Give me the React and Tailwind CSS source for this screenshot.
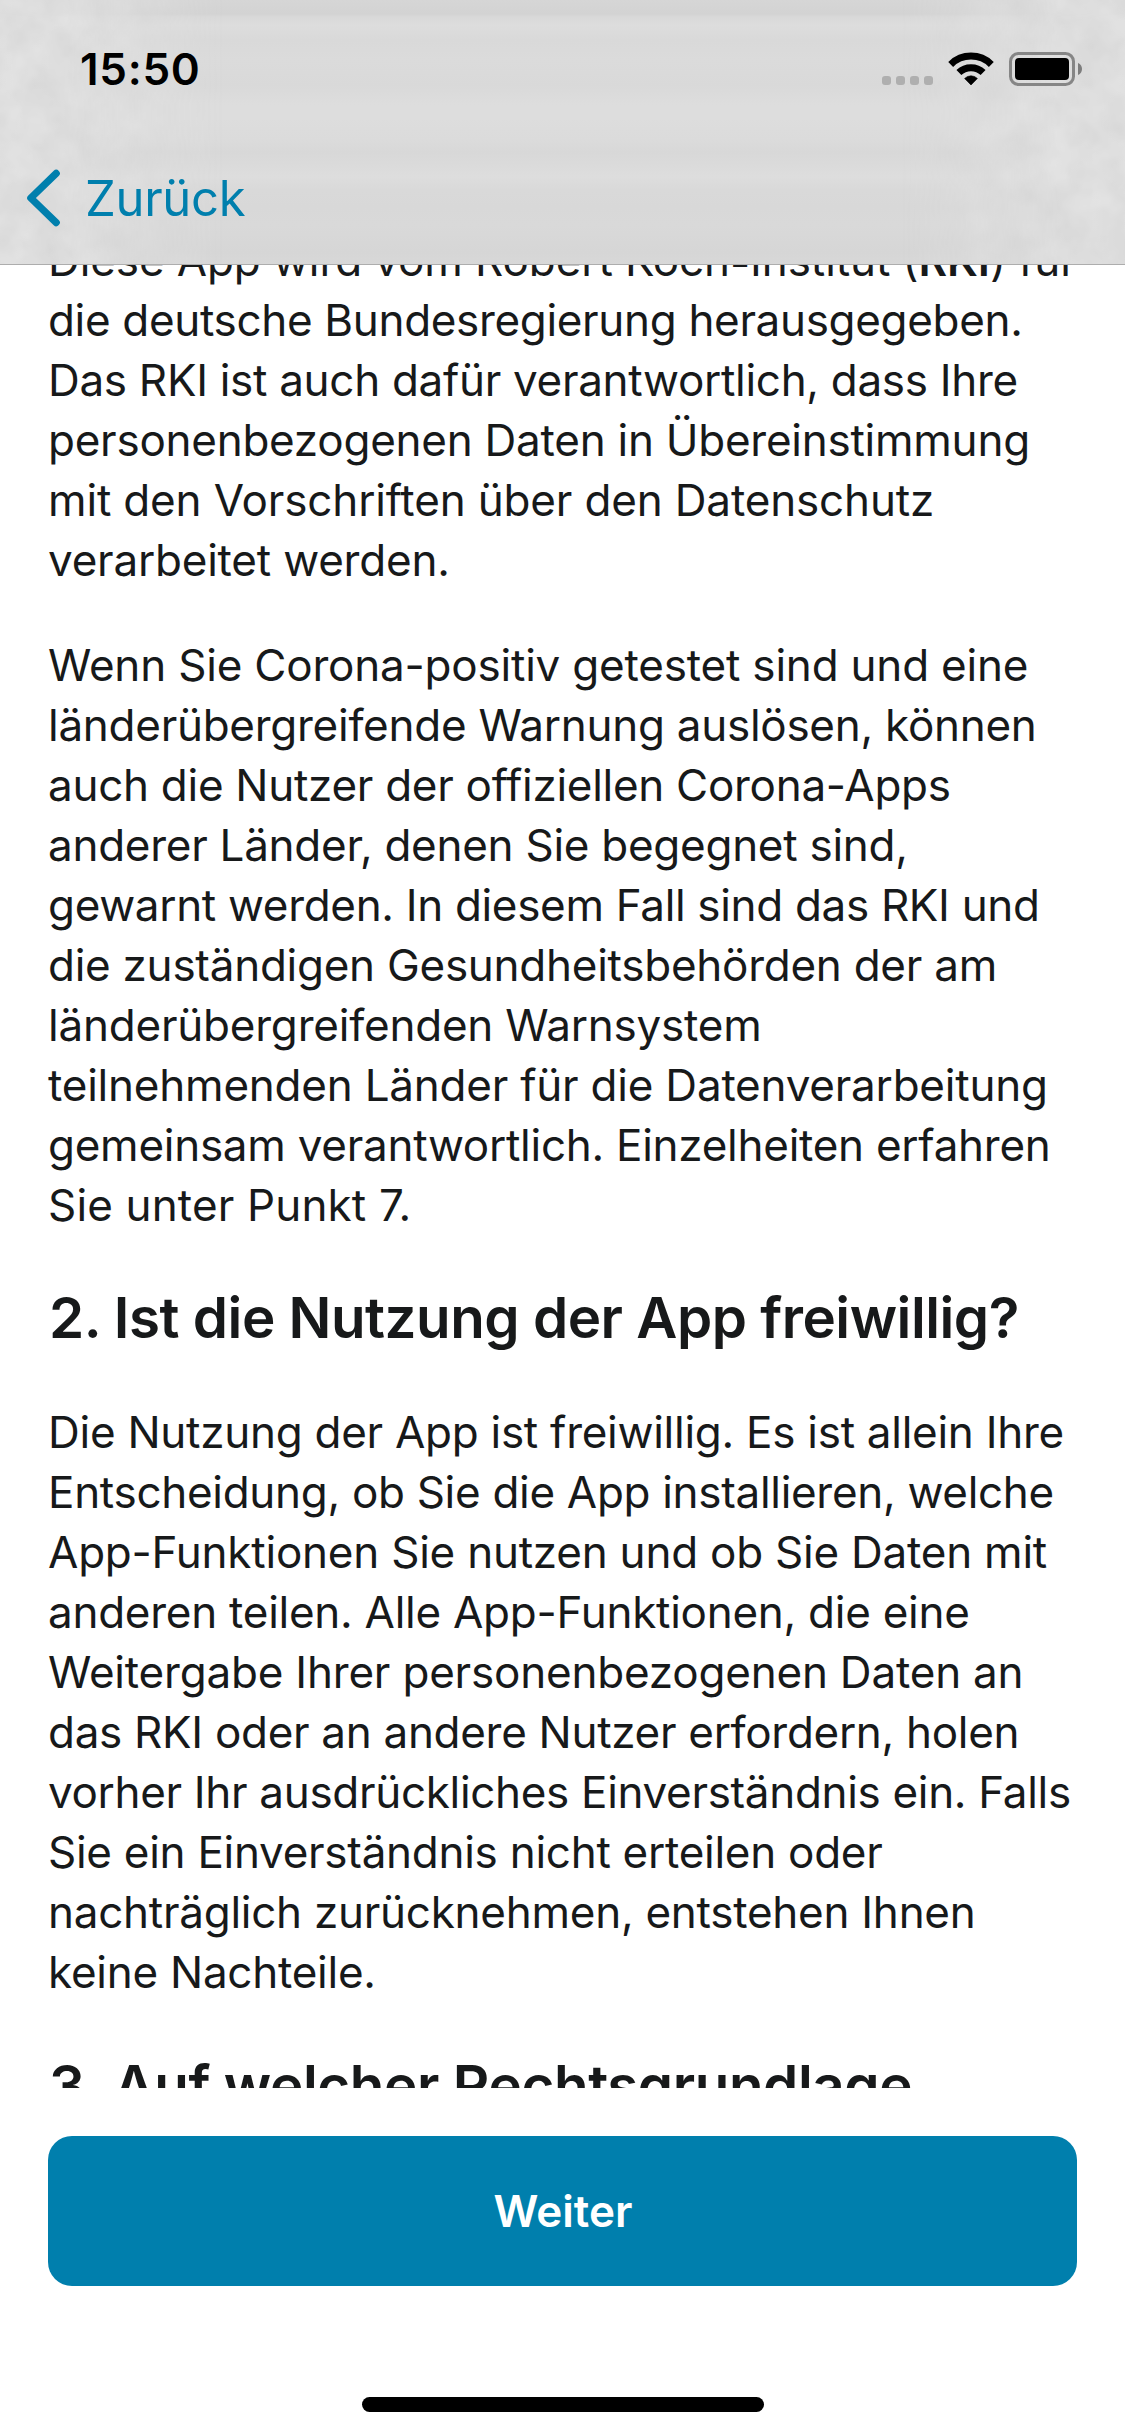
const intro = [
  { text: "die deutsche Bundesregierung herausgegeben.", cls: "tracking-[-0.33px]" },
  { text: "Das RKI ist auch dafür verantwortlich, dass Ihre", cls: "tracking-[-0.3px]" },
  { text: "personenbezogenen Daten in Übereinstimmung", cls: "tracking-[-0.25px]" },
  { text: "mit den Vorschriften über den Datenschutz", cls: "tracking-[-0.16px]" },
  { text: "verarbeitet werden.", cls: "tracking-[-0.21px]" },
];

const warning = [
  { text: "Wenn Sie Corona-positiv getestet sind und eine", cls: "tracking-[-0.2px]" },
  { text: "länderübergreifende Warnung auslösen, können", cls: "tracking-[-0.265px]" },
  { text: "auch die Nutzer der offiziellen Corona-Apps", cls: "tracking-[-0.28px]" },
  { text: "anderer Länder, denen Sie begegnet sind,", cls: "tracking-[-0.27px]" },
  { text: "gewarnt werden. In diesem Fall sind das RKI und", cls: "tracking-[-0.325px]" },
  { text: "die zuständigen Gesundheitsbehörden der am", cls: "tracking-[-0.26px]" },
  { text: "länderübergreifenden Warnsystem", cls: "tracking-[-0.21px]" },
  { text: "teilnehmenden Länder für die Datenverarbeitung", cls: "tracking-[-0.22px]" },
  { text: "gemeinsam verantwortlich. Einzelheiten erfahren", cls: "tracking-[-0.265px]" },
  { text: "Sie unter Punkt 7.", cls: "tracking-[0.15px]" },
];

const voluntary = [
  { text: "Die Nutzung der App ist freiwillig. Es ist allein Ihre", cls: "tracking-[-0.265px]" },
  { text: "Entscheidung, ob Sie die App installieren, welche", cls: "tracking-[-0.3px]" },
  { text: "App-Funktionen Sie nutzen und ob Sie Daten mit", cls: "tracking-[-0.23px]" },
  { text: "anderen teilen. Alle App-Funktionen, die eine", cls: "tracking-[-0.26px]" },
  { text: "Weitergabe Ihrer personenbezogenen Daten an", cls: "tracking-[-0.2px]" },
  { text: "das RKI oder an andere Nutzer erfordern, holen", cls: "tracking-[-0.3px]" },
  { text: "vorher Ihr ausdrückliches Einverständnis ein. Falls", cls: "tracking-[-0.32px]" },
  { text: "Sie ein Einverständnis nicht erteilen oder", cls: "tracking-[-0.27px]" },
  { text: "nachträglich zurücknehmen, entstehen Ihnen", cls: "tracking-[-0.26px]" },
  { text: "keine Nachteile.", cls: "tracking-[-0.25px]" },
];

function Lines({ lines }) {
  return lines.map((l) => (
    <span key={l.text} className={`block whitespace-nowrap ${l.cls}`}>
      {l.text}
    </span>
  ));
}

function HeaderTexture() {
  return (
    <svg className="absolute inset-0" width="1125" height="264" viewBox="0 0 1125 264" aria-hidden="true">
      <defs>
        <filter id="grain" x="0" y="0" width="100%" height="100%" colorInterpolationFilters="sRGB">
          <feTurbulence type="fractalNoise" baseFrequency="0.028" numOctaves="3" seed="7" />
          <feColorMatrix values="0.08 0 0 0 0.83  0.08 0 0 0 0.83  0.08 0 0 0 0.83  0 0 0 0 1" />
        </filter>
        <linearGradient id="sides">
          <stop offset="0" stopColor="#fff" stopOpacity="0.85" />
          <stop offset="0.06" stopColor="#fff" stopOpacity="0.8" />
          <stop offset="0.2" stopColor="#fff" stopOpacity="0" />
          <stop offset="0.8" stopColor="#fff" stopOpacity="0" />
          <stop offset="0.94" stopColor="#fff" stopOpacity="0.8" />
          <stop offset="1" stopColor="#fff" stopOpacity="0.85" />
        </linearGradient>
        <mask id="edges">
          <rect width="1125" height="264" fill="url(#sides)" />
        </mask>
      </defs>
      <g mask="url(#edges)">
        <rect width="1125" height="264" filter="url(#grain)" />
      </g>
    </svg>
  );
}

function WifiIcon() {
  return (
    <svg className="ml-[15px]" width="46" height="34" viewBox="0 0 46 34" aria-hidden="true">
      <g fill="none" stroke="#000" strokeWidth="7">
        <path d="M2.7 12.4 A29 29 0 0 1 43.3 12.4" />
        <path d="M10.9 20.6 A17.3 17.3 0 0 1 35.1 20.6" />
      </g>
      <path d="M23 33 L16.6 26.5 A9 9 0 0 1 29.4 26.5 Z" fill="#000" stroke="#000" strokeWidth="0.6" />
    </svg>
  );
}

function BatteryIcon() {
  return (
    <svg className="ml-[15px]" width="74" height="34" viewBox="0 0 74 34" aria-hidden="true">
      <rect x="1.5" y="1.5" width="63" height="31" rx="8" fill="none" stroke="#868686" strokeWidth="3" />
      <rect x="6" y="6" width="54" height="22" rx="4" fill="#000" />
      <path d="M69 11 C71.8 12.2 73 14.4 73 17 C73 19.6 71.8 21.8 69 23 Z" fill="#7d7d7d" />
    </svg>
  );
}

export default function App() {
  return (
    <div className="flex h-[2436px] w-[1125px] flex-col overflow-hidden bg-white font-[Inter,sans-serif] text-[#17191a]">
      <header className="relative h-[265px] shrink-0 border-b border-[#adadad] bg-[linear-gradient(#d6d6d6_0px,#d3d3d3_14px,#d9d9d9_17px,#dddddd_25px,#d9d9d9_40px,#dbdbdb_60px,#d9d9d9_85px,#dddddd_105px,#dddddd_118px,#dbdbdb_140px,#d8d8d8_152px,#dddddd_177px,#d9d9d9_190px,#d8d8d8_208px,#d9d9d9_225px,#d6d6d6_252px,#d8d8d8_264px)]">
        <HeaderTexture />
        <div className="relative flex h-[132px] items-start justify-between pl-[80px] pr-[42px] pt-[52px] text-black">
          <span className="mt-[-13px] text-[44px] font-semibold leading-[60px] tracking-[0.7px]">15:50</span>
          <div className="flex items-start">
            <div className="mt-6 flex gap-[5px]">
              <i className="size-[9px] rounded-[3px] bg-[#afafaf]" />
              <i className="size-[9px] rounded-[3px] bg-[#afafaf]" />
              <i className="size-[9px] rounded-[3px] bg-[#afafaf]" />
              <i className="size-[9px] rounded-[3px] bg-[#afafaf]" />
            </div>
            <WifiIcon />
            <BatteryIcon />
          </div>
        </div>
        <button className="relative flex h-[132px] items-center pl-[26px] text-[#007fad]">
          <svg width="35" height="58" viewBox="0 0 35 58" fill="none" stroke="currentColor" strokeWidth="7.2" strokeLinecap="round" strokeLinejoin="round" aria-hidden="true">
            <path d="M30.2 4.4 L4.8 29 L30.2 53.6" />
          </svg>
          <span className="ml-[24px] mt-[2px] text-[49px] leading-[60px] tracking-[-0.3px]">Zurück</span>
        </button>
      </header>

      <main className="h-[1823px] shrink-0 overflow-hidden pl-12 text-[44px] leading-[60px] [font-feature-settings:'calt'_0]">
        <p className="mt-[-35px]">
          <span className="block whitespace-nowrap tracking-[-0.1px]">
            Diese App wird vom Robert Koch<span className="inline-block translate-y-[3px]">-</span>Institut (<b className="font-semibold">RKI</b>) für
          </span>
          <Lines lines={intro} />
        </p>
        <p className="mt-[45px]">
          <Lines lines={warning} />
        </p>
        <h2 className="mt-[49px] whitespace-nowrap pl-px text-[56.5px] font-semibold leading-[68px] tracking-[-0.48px]">
          2. Ist die Nutzung der App freiwillig?
        </h2>
        <p className="mt-[50px]">
          <Lines lines={voluntary} />
        </p>
        <h2 className="mt-[50px] whitespace-nowrap pl-px text-[56.5px] font-semibold leading-[68px] tracking-[-0.42px]">
          3. Auf welcher Rechtsgrundlage
        </h2>
      </main>

      <footer className="flex flex-1 flex-col items-center px-12 pt-12">
        <button className="flex h-[150px] w-full items-center justify-center rounded-[24px] bg-[#007fad] pl-px text-[44px] font-semibold leading-[60px] text-white">
          Weiter
        </button>
        <div className="mt-[111px] h-[15px] w-[402px] rounded-full bg-black" />
      </footer>
    </div>
  );
}
